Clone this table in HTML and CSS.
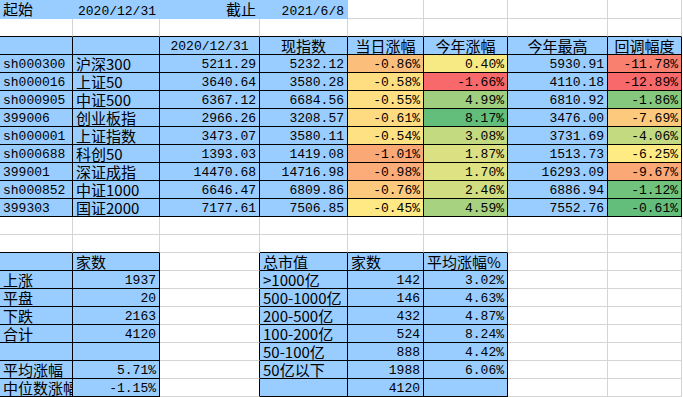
FILE: index.html
```html
<!DOCTYPE html>
<html lang="zh-CN">
<head>
<meta charset="utf-8">
<title>指数涨幅统计</title>
<link rel="stylesheet" href="styles.css">
</head>
<body>
<div class="sheet">
  <!-- row 1 -->
  <div class="c hb first">起始</div>
  <div class="c hb first n r">2020/12/31</div>
  <div class="c hb first r">截止</div>
  <div class="c hb first n r">2021/6/8</div>
  <div class="c first"></div><div class="c first"></div><div class="c first"></div><div class="c first"></div>
  <!-- row 2 -->
  <div class="c bb"></div><div class="c bb"></div><div class="c bb"></div><div class="c bb"></div>
  <div class="c bb"></div><div class="c bb"></div><div class="c bb"></div><div class="c bb"></div>
  <!-- row 3 header -->
  <div class="c b"></div>
  <div class="c b"></div>
  <div class="c b n ctr">2020/12/31</div>
  <div class="c b ctr">现指数</div>
  <div class="c b ctr">当日涨幅</div>
  <div class="c b ctr">今年涨幅</div>
  <div class="c b ctr">今年最高</div>
  <div class="c b ctr">回调幅度</div>
  <!-- data rows -->
  <div class="c b n">sh000300</div><div class="c b">沪深300</div>
  <div class="c b n r">5211.29</div><div class="c b n r">5232.12</div>
  <div class="c b n r" style="background:#FBBE7B">-0.86%</div>
  <div class="c b n r" style="background:#F7E984">0.40%</div>
  <div class="c b n r">5930.91</div>
  <div class="c b n r" style="background:#F97F6F">-11.78%</div>

  <div class="c b n">sh000016</div><div class="c b">上证50</div>
  <div class="c b n r">3640.64</div><div class="c b n r">3580.28</div>
  <div class="c b n r" style="background:#FEDE81">-0.58%</div>
  <div class="c b n r" style="background:#F8696B">-1.66%</div>
  <div class="c b n r">4110.18</div>
  <div class="c b n r" style="background:#F8696B">-12.89%</div>

  <div class="c b n">sh000905</div><div class="c b">中证500</div>
  <div class="c b n r">6367.12</div><div class="c b n r">6684.56</div>
  <div class="c b n r" style="background:#FEE082">-0.55%</div>
  <div class="c b n r" style="background:#A0CF7F">4.99%</div>
  <div class="c b n r">6810.92</div>
  <div class="c b n r" style="background:#86C87D">-1.86%</div>

  <div class="c b n">399006</div><div class="c b">创业板指</div>
  <div class="c b n r">2966.26</div><div class="c b n r">3208.57</div>
  <div class="c b n r" style="background:#FEDB80">-0.61%</div>
  <div class="c b n r" style="background:#63BE7B">8.17%</div>
  <div class="c b n r">3476.00</div>
  <div class="c b n r" style="background:#FDCA7D">-7.69%</div>

  <div class="c b n">sh000001</div><div class="c b">上证指数</div>
  <div class="c b n r">3473.07</div><div class="c b n r">3580.11</div>
  <div class="c b n r" style="background:#FEE182">-0.54%</div>
  <div class="c b n r" style="background:#C4DA81">3.08%</div>
  <div class="c b n r">3731.69</div>
  <div class="c b n r" style="background:#C3DA81">-4.06%</div>

  <div class="c b n">sh000688</div><div class="c b">科创50</div>
  <div class="c b n r">1393.03</div><div class="c b n r">1419.08</div>
  <div class="c b n r" style="background:#FBA877">-1.01%</div>
  <div class="c b n r" style="background:#DBE182">1.87%</div>
  <div class="c b n r">1513.73</div>
  <div class="c b n r" style="background:#FFEB84">-6.25%</div>

  <div class="c b n">399001</div><div class="c b">深证成指</div>
  <div class="c b n r">14470.68</div><div class="c b n r">14716.98</div>
  <div class="c b n r" style="background:#FBAC78">-0.98%</div>
  <div class="c b n r" style="background:#DFE282">1.70%</div>
  <div class="c b n r">16293.09</div>
  <div class="c b n r" style="background:#FBA877">-9.67%</div>

  <div class="c b n">sh000852</div><div class="c b">中证1000</div>
  <div class="c b n r">6646.47</div><div class="c b n r">6809.86</div>
  <div class="c b n r" style="background:#FCC97D">-0.76%</div>
  <div class="c b n r" style="background:#D0DD81">2.46%</div>
  <div class="c b n r">6886.94</div>
  <div class="c b n r" style="background:#71C27C">-1.12%</div>

  <div class="c b n">399303</div><div class="c b">国证2000</div>
  <div class="c b n r">7177.61</div><div class="c b n r">7506.85</div>
  <div class="c b n r" style="background:#FFE984">-0.45%</div>
  <div class="c b n r" style="background:#A7D27F">4.59%</div>
  <div class="c b n r">7552.76</div>
  <div class="c b n r" style="background:#63BE7B">-0.61%</div>

  <!-- row 13 -->
  <div class="c"></div><div class="c"></div><div class="c"></div><div class="c"></div>
  <div class="c"></div><div class="c"></div><div class="c"></div><div class="c"></div>
  <!-- row 14 -->
  <div class="c bb"></div><div class="c bb"></div><div class="c"></div><div class="c bb"></div>
  <div class="c bb"></div><div class="c bb"></div><div class="c"></div><div class="c"></div>
  <!-- row 15 -->
  <div class="c b"></div><div class="c b">家数</div><div class="c br"></div>
  <div class="c b">总市值</div><div class="c b">家数</div><div class="c b">平均涨幅%</div>
  <div class="c"></div><div class="c"></div>
  <!-- row 16 -->
  <div class="c b">上涨</div><div class="c b n r">1937</div><div class="c br"></div>
  <div class="c b">&gt;1000亿</div><div class="c b n r">142</div><div class="c b n r">3.02%</div>
  <div class="c"></div><div class="c"></div>
  <!-- row 17 -->
  <div class="c b">平盘</div><div class="c b n r">20</div><div class="c br"></div>
  <div class="c b">500-1000亿</div><div class="c b n r">146</div><div class="c b n r">4.63%</div>
  <div class="c"></div><div class="c"></div>
  <!-- row 18 -->
  <div class="c b">下跌</div><div class="c b n r">2163</div><div class="c br"></div>
  <div class="c b">200-500亿</div><div class="c b n r">432</div><div class="c b n r">4.87%</div>
  <div class="c"></div><div class="c"></div>
  <!-- row 19 -->
  <div class="c b">合计</div><div class="c b n r">4120</div><div class="c br"></div>
  <div class="c b">100-200亿</div><div class="c b n r">524</div><div class="c b n r">8.24%</div>
  <div class="c"></div><div class="c"></div>
  <!-- row 20 -->
  <div class="c b"></div><div class="c b"></div><div class="c br"></div>
  <div class="c b">50-100亿</div><div class="c b n r">888</div><div class="c b n r">4.42%</div>
  <div class="c"></div><div class="c"></div>
  <!-- row 21 -->
  <div class="c b">平均涨幅</div><div class="c b n r">5.71%</div><div class="c br"></div>
  <div class="c b">50亿以下</div><div class="c b n r">1988</div><div class="c b n r">6.06%</div>
  <div class="c"></div><div class="c"></div>
  <!-- row 22 -->
  <div class="c b clip">中位数涨幅</div><div class="c b n r">-1.15%</div><div class="c br"></div>
  <div class="c b"></div><div class="c b n r">4120</div><div class="c b"></div>
  <div class="c"></div><div class="c"></div>
</div>
</body>
</html>
```
FILE: styles.css
```css
html, body {
  margin: 0;
  padding: 0;
  background: #ffffff;
}

.sheet {
  display: grid;
  grid-template-columns: 73px 87px 100px 88px 76px 84px 100px 74px;
  grid-template-rows: 19px;
  grid-auto-rows: 18px;
  width: 682px;
  font-family: "Noto Sans CJK SC", "Noto Sans", sans-serif;
  font-size: 15px;
  color: #000;
}

.c {
  box-sizing: border-box;
  border-right: 1px solid #d4d4d4;
  border-bottom: 1px solid #d4d4d4;
  padding: 0 3px;
  line-height: 17px;
  white-space: nowrap;
  text-align: left;
}

.first {
  line-height: 18px;
}

.hb {
  background: #99ccff;
  border-color: #99ccff;
}

.b {
  background: #99ccff;
  border-color: #000;
}

.bb {
  border-bottom-color: #000;
}

.br {
  border-right-color: #000;
}

.n {
  font-family: "Liberation Mono", "DejaVu Sans Mono", monospace;
  font-size: 13px;
  line-height: 14px;
  padding-top: 3px;
}

.first.n {
  padding-top: 5px;
}

.r {
  text-align: right;
}

.ctr {
  text-align: center;
}

.clip {
  padding-right: 0;
  overflow: hidden;
  text-overflow: clip;
}
```
